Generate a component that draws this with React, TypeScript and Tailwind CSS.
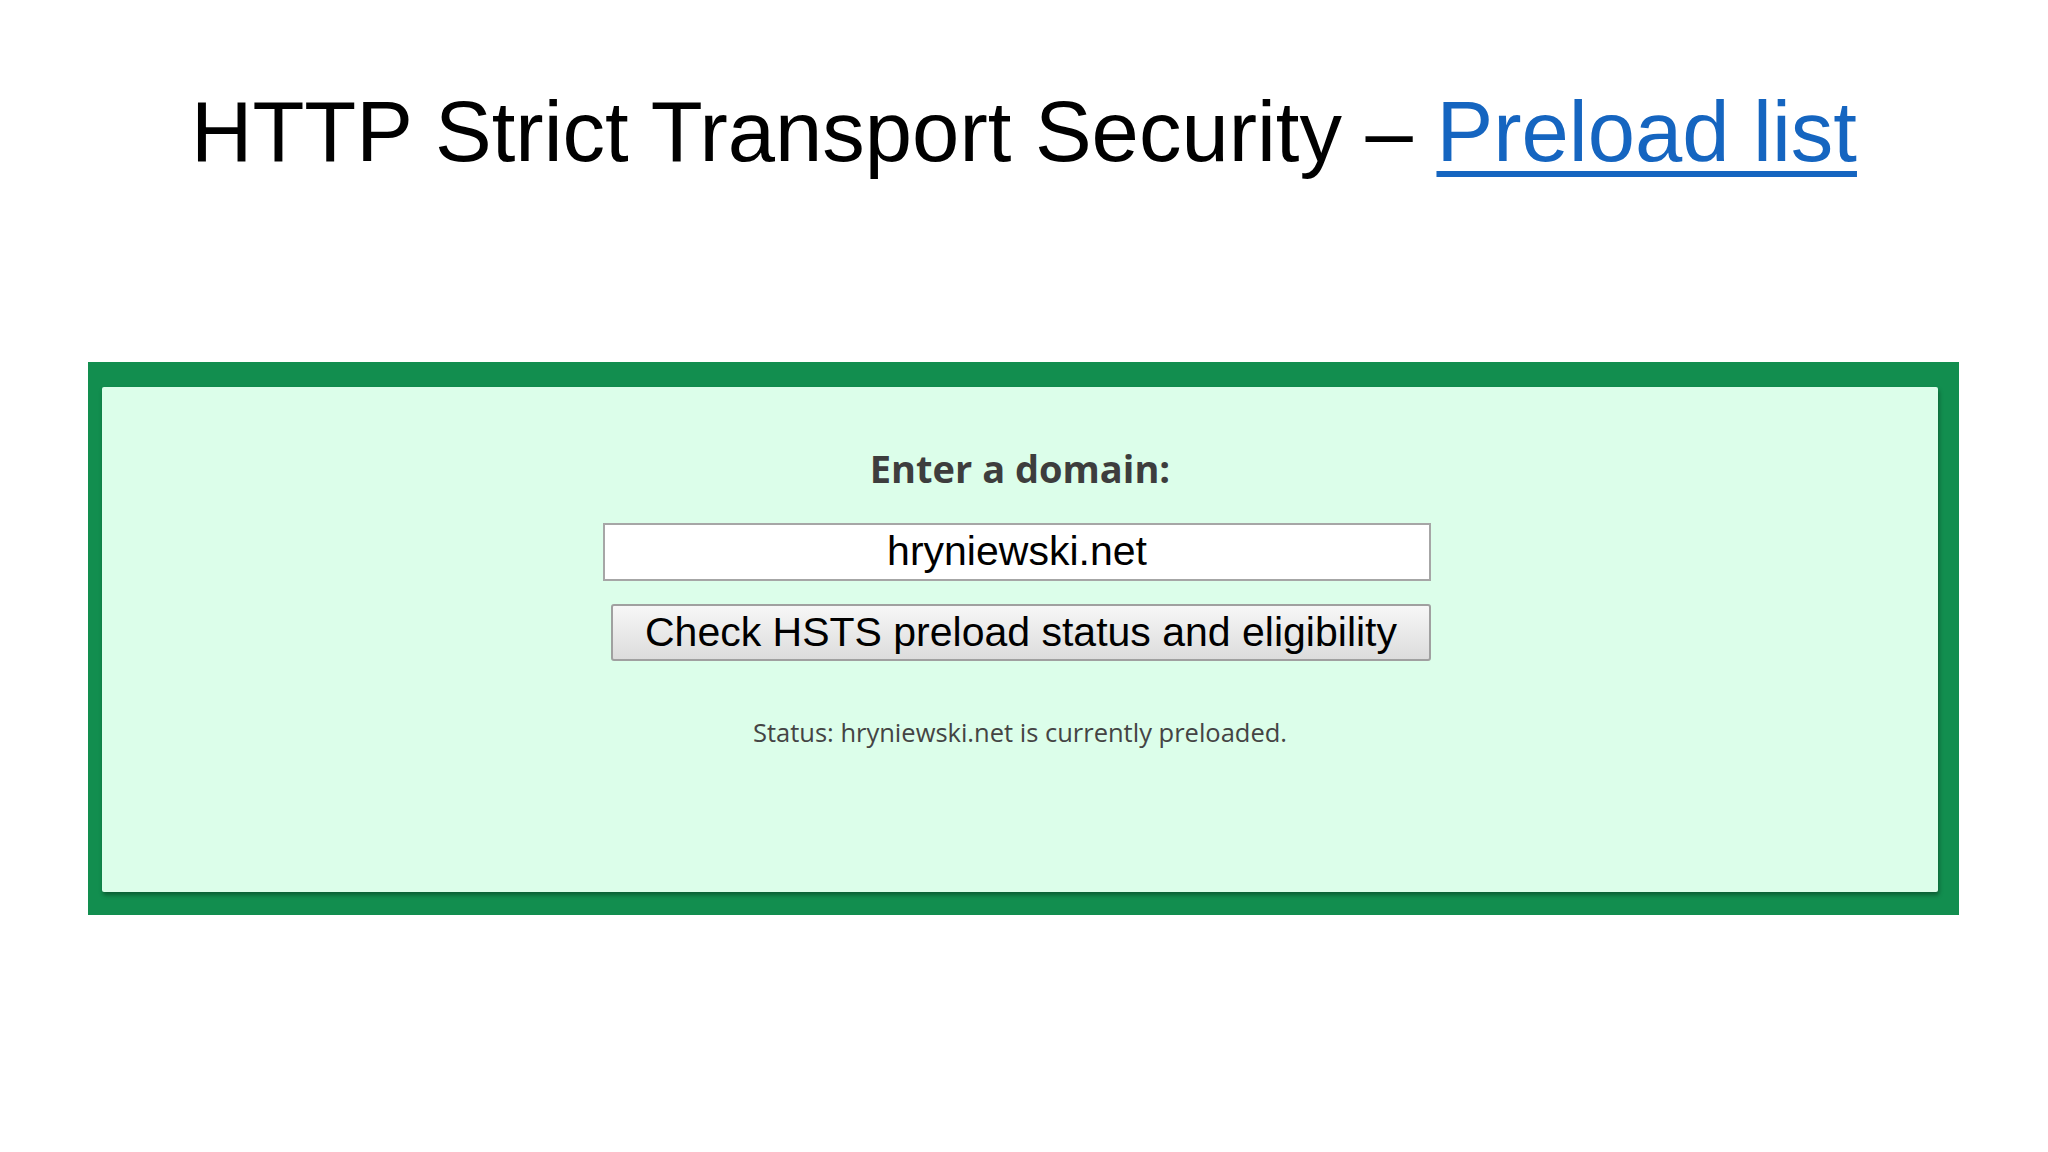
import React from 'react';

const App: React.FC = () => {
  return (
    <div className="min-h-[1152px] w-[2048px] bg-white font-['Liberation_Sans',Arial,sans-serif]">
      <h1 className="pt-[89px] text-center text-[85px] leading-[86px] font-normal text-black">
        HTTP Strict Transport Security –{' '}
        <a
          href="#"
          className="text-[#1565c0] underline decoration-[6px] underline-offset-[10px]"
        >
          Preload list
        </a>
      </h1>

      <div className="mt-[187px] ml-[88px] w-[1871px] bg-[#128e4f] pt-[25px] pl-[14px] pr-[21px] pb-[23px]">
        <div className="h-[505px] rounded-[2px] bg-[#dcfeea] shadow-[1px_3px_4px_rgba(0,0,0,0.35)] pt-[62px] flex flex-col items-center">
          <h2 className="font-['Open_Sans',sans-serif] text-[38px] leading-[38px] font-bold text-[#3d3d3d]">
            Enter a domain:
          </h2>

          <form
            className="mt-[36px] mr-[6px] w-[828px] flex flex-col items-end"
            onSubmit={(e) => e.preventDefault()}
          >
            <input
              type="text"
              defaultValue="hryniewski.net"
              className="w-[828px] h-[58px] border-2 border-[#a6a6a6] bg-white text-center text-[41px] text-black outline-none font-['Liberation_Sans',Arial,sans-serif]"
            />
            <button
              type="submit"
              className="mt-[23px] w-[820px] h-[57px] rounded-[3px] border-2 border-[#a0a0a0] bg-gradient-to-b from-[#f7f7f7] to-[#dcdcdc] text-[41px] leading-none text-black font-['Liberation_Sans',Arial,sans-serif]"
            >
              Check HSTS preload status and eligibility
            </button>
          </form>

          <p className="mt-[59px] font-['Open_Sans',sans-serif] text-[25.5px] leading-[25px] text-[#444444]">
            Status: hryniewski.net is currently preloaded.
          </p>
        </div>
      </div>
    </div>
  );
};

export default App;
